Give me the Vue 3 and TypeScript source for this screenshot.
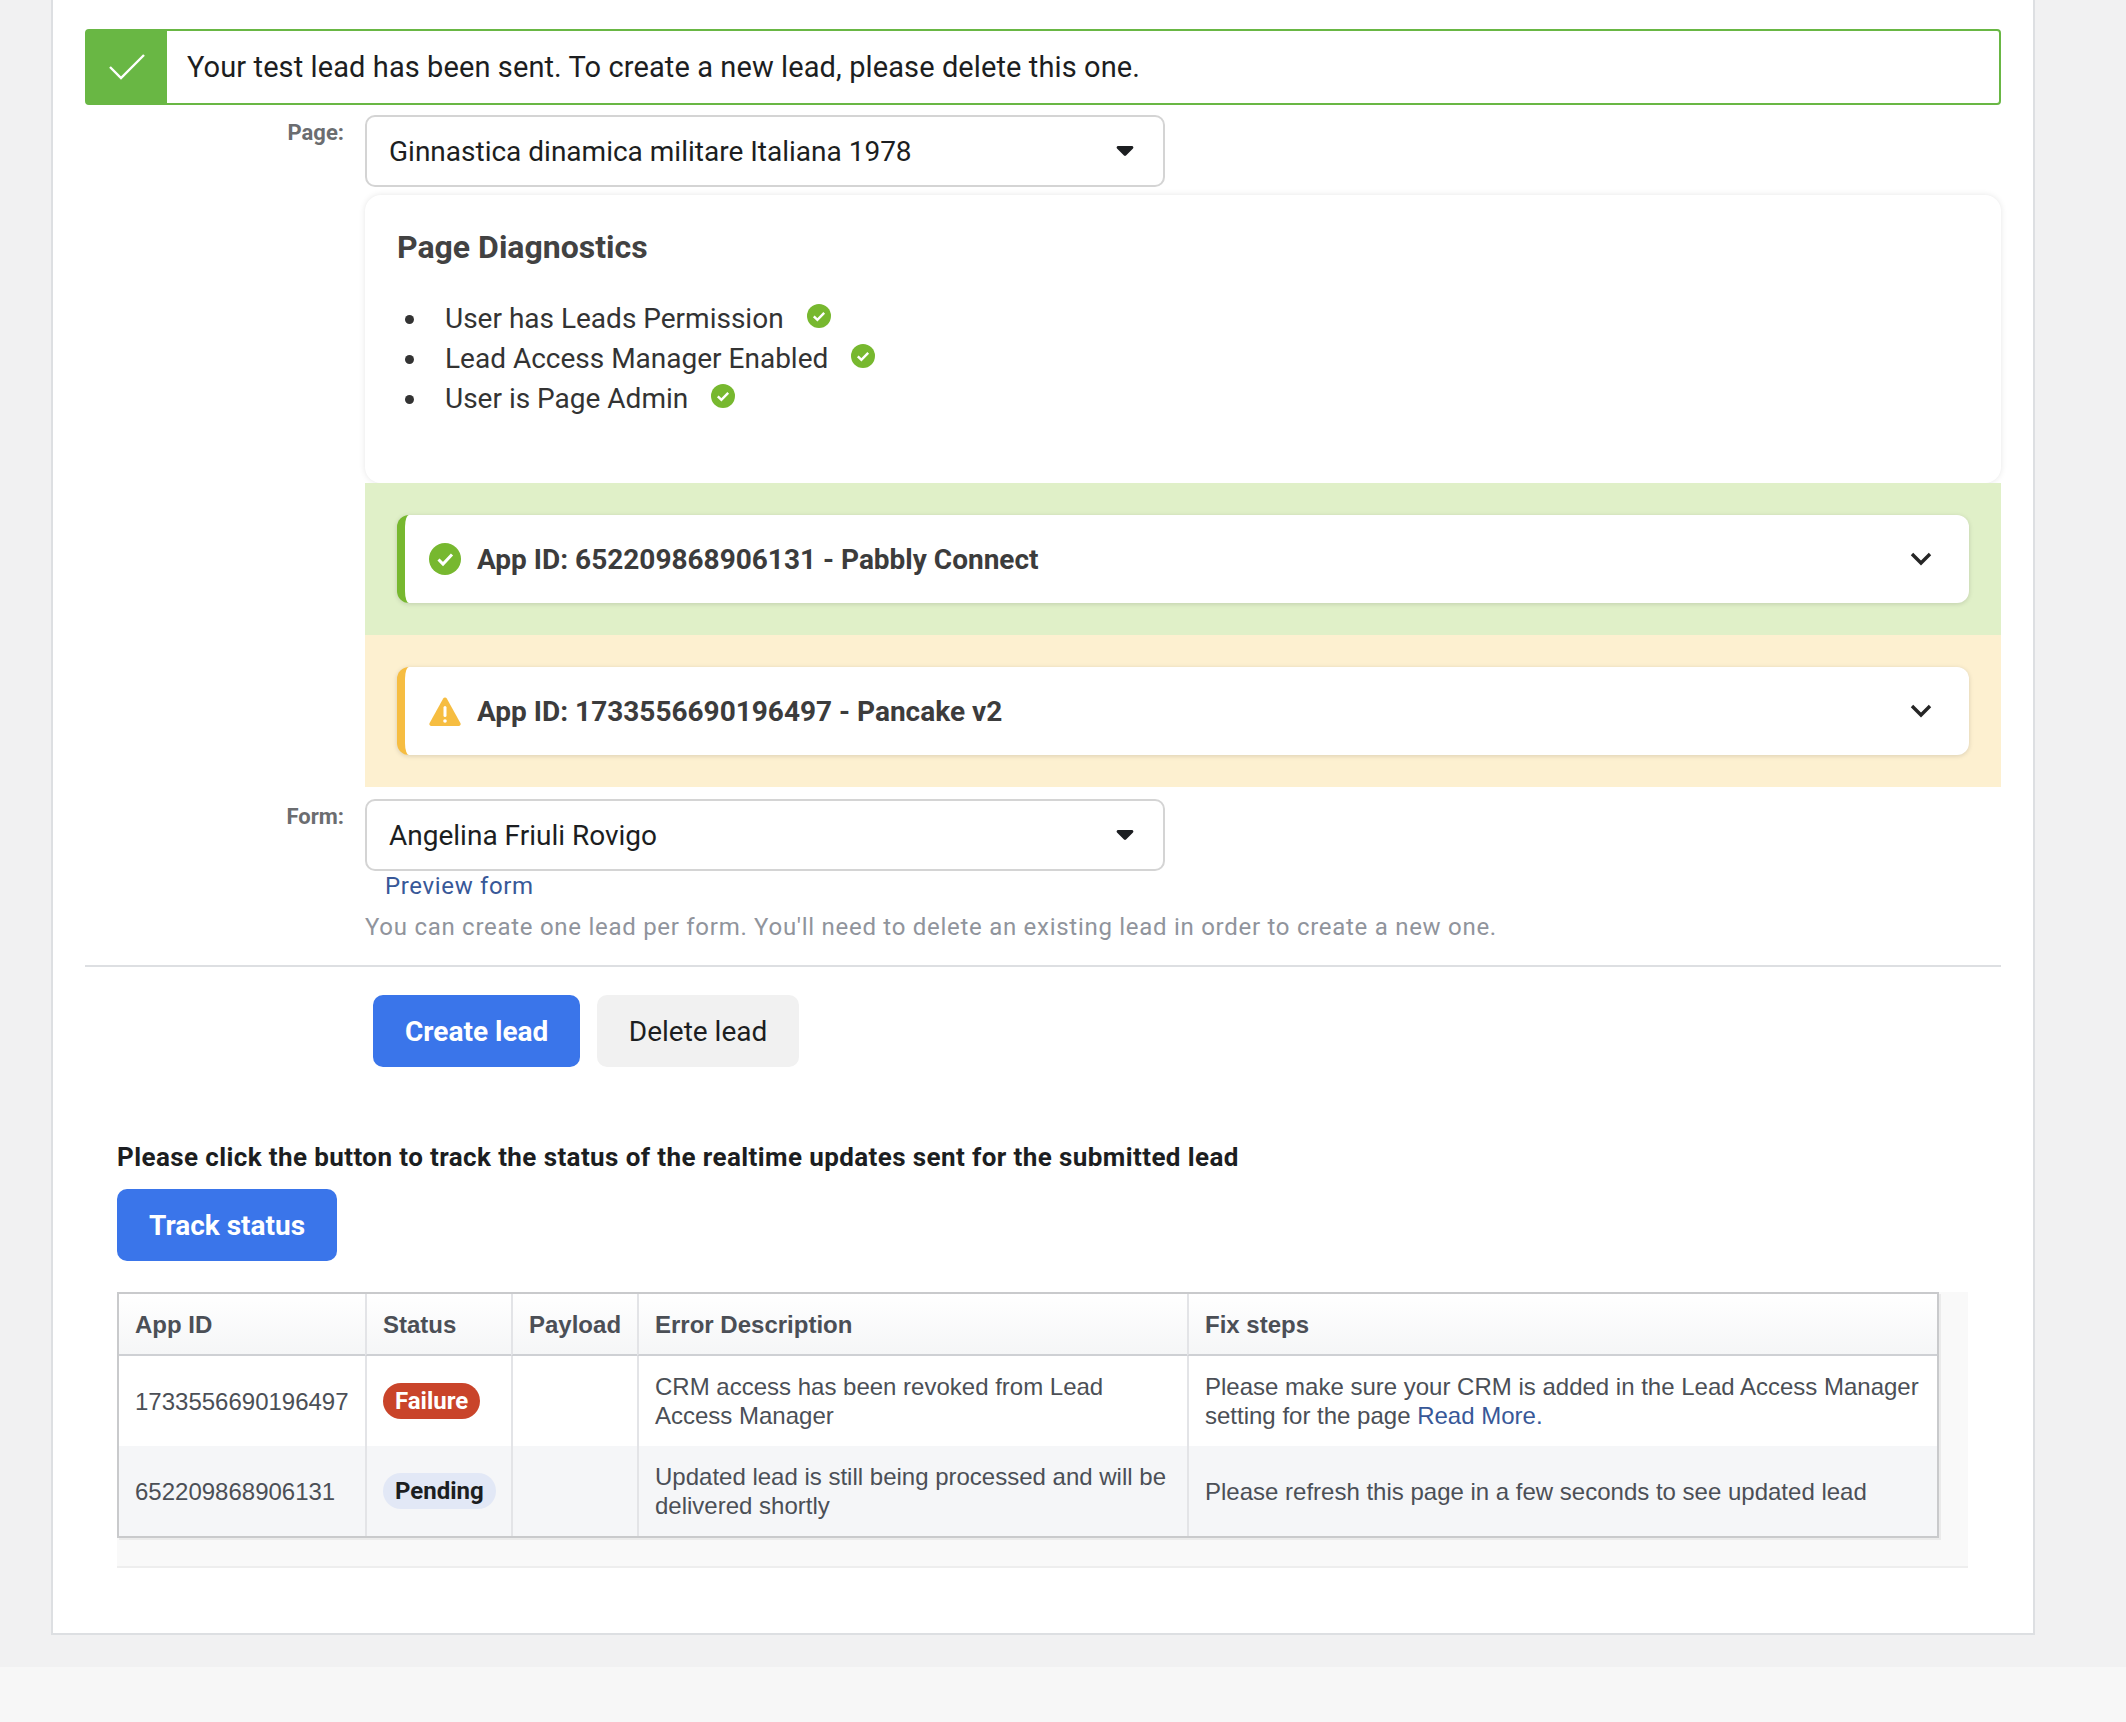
<template>
  <div class="page">
    <div class="card">
      <div class="alert">
        <div class="alert-icon">
          <svg width="36" height="26" viewBox="0 0 36 26"><path d="M1 13l11 11L35 1" fill="none" stroke="#fff" stroke-width="2.4" /></svg>
        </div>
        <div class="alert-text">Your test lead has been sent. To create a new lead, please delete this one.</div>
      </div>

      <div class="row">
        <label class="label">Page:</label>
        <div class="field">
          <div class="select">
            <span>Ginnastica dinamica militare Italiana 1978</span>
            <svg width="18" height="12" viewBox="0 0 18 12"><path d="M2 1h14a1.500 1.500 0 0 1 1 2.500L10 10.500a1.500 1.500 0 0 1-2 0L1 3.500A1.500 1.500 0 0 1 2 1z" fill="#1c1e21" /></svg>
          </div>

          <div class="diag">
            <h3>Page Diagnostics</h3>
            <ul>
              <li v-for="item in checks" :key="item">
                <span>{{ item }}</span>
                <svg class="tick" width="24" height="24" viewBox="0 0 24 24">
                  <circle cx="12" cy="12" r="12" fill="#77b82f" />
                  <path d="M6.800 12.300l3.600 3.600 6.800-7" fill="none" stroke="#fff" stroke-width="2.400" />
                </svg>
              </li>
            </ul>
          </div>

          <div v-for="app in apps" :key="app.id" class="panel" :class="app.kind">
            <div class="app-card">
              <svg v-if="app.kind === 'ok'" class="app-icon" width="32" height="32" viewBox="0 0 32 32">
                <circle cx="16" cy="16" r="16" fill="#77b82f" />
                <path d="M9.500 16.500l4.500 4.500 9-9.500" fill="none" stroke="#fff" stroke-width="3" />
              </svg>
              <svg v-else class="app-icon" width="32" height="32" viewBox="0 0 32 32">
                <path d="M16 2.500c.8 0 1.400.4 1.800 1.100l13.700 24.600c.6 1.200-.2 2.800-1.600 2.800H2.100C.7 31-.1 29.400.5 28.200L14.200 3.600c.4-.7 1-1.100 1.800-1.100z" fill="#f6bd41" />
                <rect x="14.500" y="11" width="3" height="11" rx="1.500" fill="#fff" />
                <circle cx="16" cy="26" r="1.800" fill="#fff" />
              </svg>
              <span class="app-title">App ID: {{ app.id }} - {{ app.name }}</span>
              <svg class="chevron" width="22" height="14" viewBox="0 0 22 14"><path d="M2 2l9 9 9-9" fill="none" stroke="#262626" stroke-width="3.400" /></svg>
            </div>
          </div>
        </div>
      </div>

      <div class="row form-row">
        <label class="label">Form:</label>
        <div class="field">
          <div class="select">
            <span>Angelina Friuli Rovigo</span>
            <svg width="18" height="12" viewBox="0 0 18 12"><path d="M2 1h14a1.500 1.500 0 0 1 1 2.500L10 10.500a1.500 1.500 0 0 1-2 0L1 3.500A1.500 1.500 0 0 1 2 1z" fill="#1c1e21" /></svg>
          </div>
          <a class="preview">Preview form</a>
          <p class="help">You can create one lead per form. You'll need to delete an existing lead in order to create a new one.</p>
        </div>
      </div>

      <div class="actions">
        <button class="btn primary">Create lead</button>
        <button class="btn secondary">Delete lead</button>
      </div>

      <div class="track">
        <p class="track-note">Please click the button to track the status of the realtime updates sent for the submitted lead</p>
        <button class="btn primary">Track status</button>
        <div class="table-wrap">
          <table>
            <colgroup>
              <col style="width: 246px" />
              <col style="width: 146px" />
              <col style="width: 126px" />
              <col style="width: 550px" />
              <col />
            </colgroup>
            <thead>
              <tr>
                <th>App ID</th>
                <th>Status</th>
                <th>Payload</th>
                <th>Error Description</th>
                <th>Fix steps</th>
              </tr>
            </thead>
            <tbody>
              <tr>
                <td>1733556690196497</td>
                <td><span class="badge failure">Failure</span></td>
                <td></td>
                <td>CRM access has been revoked from Lead Access Manager</td>
                <td>Please make sure your CRM is added in the Lead Access Manager setting for the page <a>Read More.</a></td>
              </tr>
              <tr>
                <td>652209868906131</td>
                <td><span class="badge pending">Pending</span></td>
                <td></td>
                <td>Updated lead is still being processed and will be delivered shortly</td>
                <td>Please refresh this page in a few seconds to see updated lead</td>
              </tr>
            </tbody>
          </table>
        </div>
      </div>
    </div>
    <div class="footer"></div>
  </div>
</template>

<script setup lang="ts">
const checks: string[] = [
  'User has Leads Permission',
  'Lead Access Manager Enabled',
  'User is Page Admin',
];

const apps = [
  { id: '652209868906131', name: 'Pabbly Connect', kind: 'ok' },
  { id: '1733556690196497', name: 'Pancake v2', kind: 'warn' },
];
</script>

<style>
body {
  background: #f1f1f2;
}
</style>

<style scoped>
.page {
  width: 2126px;
  height: 1722px;
  overflow: hidden;
  font-family: Roboto, "Liberation Sans", sans-serif;
  color: #1c1e21;
}

.card {
  box-sizing: border-box;
  width: 1984px;
  height: 1635px;
  margin-left: 51px;
  padding: 29px 32px 0;
  background: #fff;
  border-left: 2px solid #dddfe2;
  border-right: 2px solid #dddfe2;
  border-bottom: 2px solid #dddfe2;
}

.alert {
  box-sizing: border-box;
  display: flex;
  align-items: center;
  height: 76px;
  border: 2px solid #69b744;
  border-radius: 4px;
}

.alert-icon {
  display: flex;
  align-items: center;
  justify-content: center;
  width: 80px;
  height: 72px;
  background: #69b744;
}

.alert-text {
  padding-left: 20px;
  font-size: 29px;
  letter-spacing: 0.1px;
}

.row {
  display: flex;
  margin-top: 10px;
}

.form-row {
  margin-top: 12px;
}

.label {
  width: 259px;
  padding-top: 6px;
  text-align: right;
  font-size: 22px;
  font-weight: 700;
  line-height: 24px;
  color: #6b6d70;
}

.field {
  flex: 1;
  min-width: 0;
  margin-left: 21px;
}

.select {
  box-sizing: border-box;
  display: flex;
  align-items: center;
  justify-content: space-between;
  width: 800px;
  height: 72px;
  padding: 0 29px 0 22px;
  border: 2px solid #d4d4d4;
  border-radius: 10px;
  font-size: 28px;
}

.diag {
  box-sizing: border-box;
  height: 288px;
  margin-top: 8px;
  padding: 34px 32px 0;
  background: #fff;
  border-radius: 16px;
  box-shadow: 0 0 6px rgba(0, 0, 0, 0.1);
  color: #3c3c3c;
}

.diag h3 {
  margin: 0;
  font-size: 32px;
  font-weight: 700;
  line-height: 36px;
  color: #424242;
}

.diag ul {
  margin: 34px 0 0;
  padding-left: 8px;
  list-style: none;
  font-size: 28px;
  line-height: 40px;
  color: #333;
}

.diag li {
  display: flex;
  align-items: center;
}

.diag li::before {
  content: "";
  width: 9px;
  height: 9px;
  margin-right: 31px;
  border-radius: 50%;
  background: #333;
}

.tick {
  margin: -6px 0 0 23px;
}

.panel {
  box-sizing: border-box;
  height: 152px;
  padding: 32px;
}

.panel.ok {
  background: #e0f0c8;
}

.panel.warn {
  background: #fdf0d0;
}

.app-card {
  display: flex;
  align-items: center;
  box-sizing: border-box;
  height: 88px;
  padding: 0 37px 0 24px;
  background: #fff;
  border-left: 8px solid #77b82f;
  border-radius: 12px;
  box-shadow: 0 1px 5px rgba(0, 0, 0, 0.14);
}

.warn .app-card {
  border-left-color: #f6bd41;
}

.app-icon {
  flex-shrink: 0;
}

.app-title {
  flex: 1;
  margin-left: 16px;
  font-size: 28px;
  font-weight: 700;
  color: #3c3c3c;
}

.preview {
  display: block;
  margin: 0 0 0 20px;
  font-size: 24px;
  line-height: 30px;
  letter-spacing: 0.65px;
  color: #385898;
}

.help {
  margin: 10px 0 0;
  font-size: 24px;
  line-height: 32px;
  letter-spacing: 0.72px;
  color: #90949c;
}

.actions {
  display: flex;
  gap: 17px;
  margin-top: 22px;
  padding: 28px 0 0 288px;
  border-top: 2px solid #dddfe2;
}

.btn {
  height: 72px;
  padding: 0 32px;
  border: 0;
  border-radius: 10px;
  font-family: Roboto, "Liberation Sans", sans-serif;
  font-size: 28px;
}

.primary {
  background: #3a75ea;
  color: #fff;
  font-weight: 700;
}

.secondary {
  padding: 0 31.5px;
  background: #f1f1f1;
  color: #1c1e21;
}

.track {
  padding-left: 32px;
}

.track-note {
  margin: 72px 0 14px;
  font-size: 26px;
  font-weight: 700;
  line-height: 36px;
  letter-spacing: 0.4px;
  color: #1c1e21;
}

.table-wrap {
  box-sizing: border-box;
  width: 1851px;
  margin-top: 31px;
  padding-bottom: 28px;
  background: #f9f9f9;
  border-bottom: 2px solid #eeeeee;
}

table {
  box-sizing: border-box;
  width: 1822px;
  table-layout: fixed;
  border-collapse: separate;
  border-spacing: 0;
  border: 2px solid #c9cacc;
  background: #fff;
  box-shadow: 2px 2px 0 #ebebeb;
  font-family: "Liberation Sans", Arial, sans-serif;
  font-size: 24px;
  line-height: 29px;
  color: #4b4f56;
}

th {
  box-sizing: border-box;
  height: 62px;
  padding: 0 16px;
  text-align: left;
  font-weight: 700;
  background: linear-gradient(#ffffff, #f5f6f7);
  border-bottom: 2px solid #ced0d4;
}

td {
  box-sizing: border-box;
  height: 90px;
  padding: 0 16px;
}

th + th,
td + td {
  border-left: 2px solid #e3e4e7;
}

tbody tr:nth-child(2) td {
  background: #f5f6f8;
}

td a {
  color: #385898;
}

.badge {
  display: inline-block;
  padding: 0 12px;
  border-radius: 18px;
  font-family: Roboto, "Liberation Sans", sans-serif;
  font-size: 24px;
  font-weight: 700;
  line-height: 36px;
}

.failure {
  background: #c9442a;
  color: #fff;
}

.pending {
  background: #e2e8f6;
  color: #1c1e21;
}

.footer {
  height: 55px;
  margin-top: 32px;
  background: #f7f7f7;
}
</style>
